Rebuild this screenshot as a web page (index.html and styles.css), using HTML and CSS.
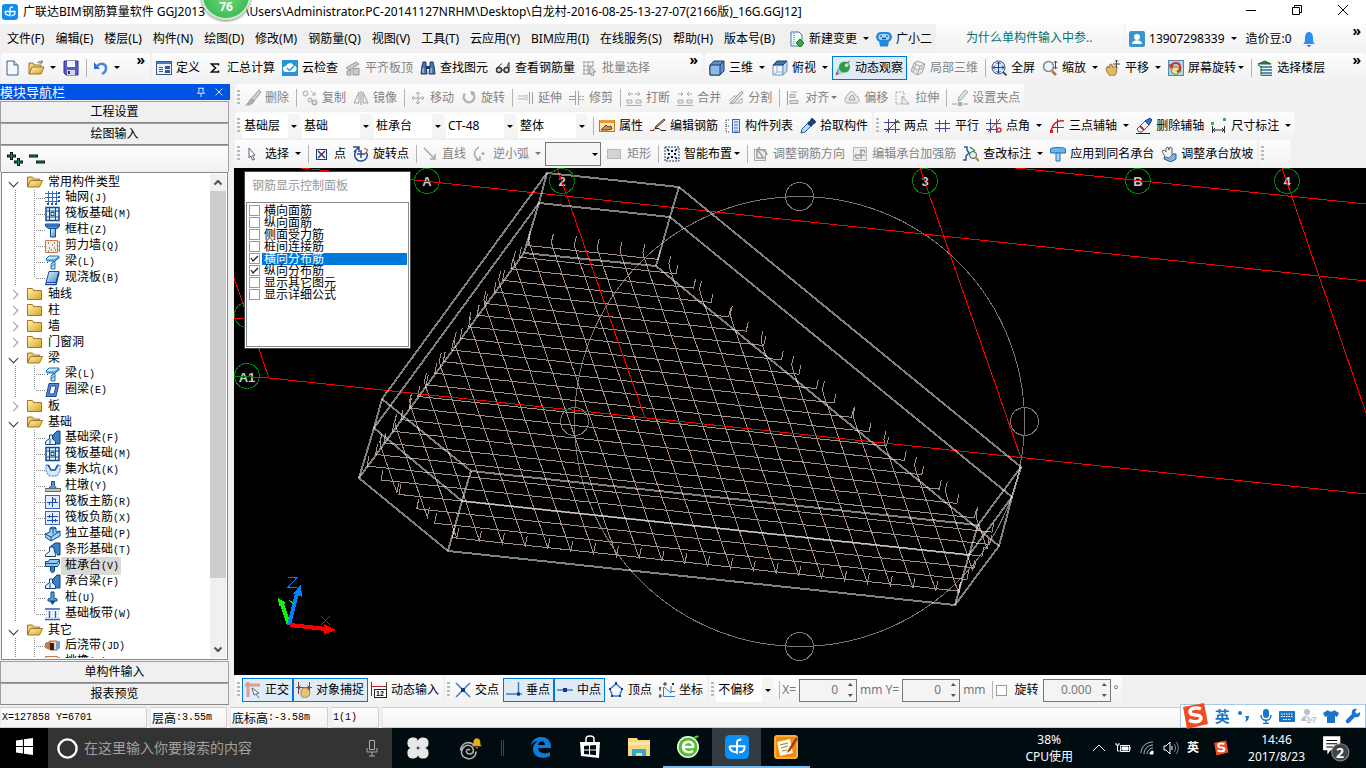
FILE: index.html
```html
<!DOCTYPE html>
<html lang="zh-CN">

<head>
    <meta charset="UTF-8">
    <meta name="viewport" content="width=device-width, initial-scale=1.0">
    <title>广联达BIM钢筋算量软件 GGJ2013</title>
    <link rel="stylesheet" href="styles.css">
</head>

<body>
    <!-- icon sprite -->
    <svg class="sprite" aria-hidden="true">
        <defs>
            <linearGradient id="g-folder" x1="0" y1="0" x2="1" y2="1">
                <stop offset="0" stop-color="#fff3b8" />
                <stop offset="1" stop-color="#e0a020" />
            </linearGradient>
            <linearGradient id="g-blue" x1="0" y1="0" x2="1" y2="1">
                <stop offset="0" stop-color="#e8f2fc" />
                <stop offset="1" stop-color="#4a8ac8" />
            </linearGradient>
        </defs>
        <symbol id="i-app" viewBox="0 0 16 16"><rect width="16" height="16" rx="3" fill="#0d8ef0" /><path d="M8 12.500V5q0-2 3-2M3 7.500h10v1q0 3-3.500 3M3 7.500q0 4 5 4" fill="none" stroke="#fff" stroke-width="1.300" /></symbol>
        <symbol id="i-new" viewBox="0 0 16 16"><path d="M2 1h7l4 4v10H2z" fill="#f4f9ff" stroke="#40608c" /><path d="M9 1v4h4" fill="#cfe0f4" stroke="#40608c" /></symbol>
        <symbol id="i-open" viewBox="0 0 16 16"><path d="M1 14V3h4l1 2h7v2" fill="#f7d477" stroke="#9a7420" /><path d="M1 14l3-7h12l-3 7z" fill="url(#g-folder)" stroke="#9a7420" /><path d="M9 3c2-2 4-2 5 0M14 0v3h-3" fill="none" stroke="#567" /></symbol>
        <symbol id="i-save" viewBox="0 0 16 16"><path d="M1 1h14v14H3l-2-2z" fill="#5a5ad0" stroke="#30308c" /><rect x="4" y="1" width="8" height="6" fill="#f4f4ff" /><rect x="4" y="10" width="8" height="5" fill="#d8d8e8" /><rect x="5" y="11" width="2" height="3" fill="#30308c" /></symbol>
        <symbol id="i-undo" viewBox="0 0 16 16"><path d="M2 2v7h6z" fill="#2f6fd0" /><path d="M5 6c4-4 9-2 9 2 0 3-2 5-4 6" fill="none" stroke="#4a86dc" stroke-width="2.500" /></symbol>
        <symbol id="i-define" viewBox="0 0 16 16"><rect x=".5" y="1.500" width="15" height="13" fill="#eaf2fc" stroke="#34588c" /><rect x="1" y="2" width="14" height="2" fill="#4a7cc0" /><path d="M3 7.500h4M3 9.500h4M3 11.500h4" stroke="#34588c" /><path d="M9 6h5v3H9zM9 10h5v3H9z" fill="#34588c" /></symbol>
        <symbol id="i-sum" viewBox="0 0 16 16"><path d="M11.500 5.500V4h-7l4 4-4 4h7v-1.500" fill="none" stroke="#111" stroke-width="1.600" /></symbol>
        <symbol id="i-cloud" viewBox="0 0 16 16"><rect width="16" height="16" fill="#2595d8" /><path d="M4 12a3 3 0 0 1 0-6 4 4 0 0 1 7.500-.5A3.300 3.300 0 0 1 12 12z" fill="#fff" /><path d="M5 8l2.500 2.500L12 6" fill="none" stroke="#2595d8" stroke-width="1.500" /></symbol>
        <symbol id="i-slab" viewBox="0 0 16 16"><path d="M1 8l10-6 3 2-9 6zM2 15V11l4-1v5zM8 15V9l6-1v7z" fill="#c9c9c9" stroke="#999" /></symbol>
        <symbol id="i-find" viewBox="0 0 16 16"><path d="M3 2h3v3l1 9H1l1-8zM10 2h3l1 4 1 8H9l1-9z" fill="#4a74ac" stroke="#1c3864" /><path d="M6 6h4v3H6z" fill="#1c3864" /><path d="M3 8v5M11 8v5" stroke="#cfe0f4" /></symbol>
        <symbol id="i-glasses" viewBox="0 0 16 16"><path d="M3 7L7 3.500M12 7l2-4.500v7M6.500 10h3" fill="none" stroke="#333" /><circle cx="4" cy="10" r="2.500" fill="#dde" stroke="#333" stroke-width="1.500" /><circle cx="11.500" cy="10" r="2.500" fill="#dde" stroke="#333" stroke-width="1.500" /></symbol>
        <symbol id="i-batch" viewBox="0 0 16 16"><path d="M1 2h11M1 6h11M1 10h8M1 14h8M2 1v14M6 1v14M11 1v5" stroke="#a4a4a4" /><path d="M8 6l6 6h-3l1 3-2 1-1-3-2 1z" fill="#ddd" stroke="#999" /></symbol>
        <symbol id="i-cube" viewBox="0 0 16 16"><path d="M1 5l4-4h10v10l-4 4H1z" fill="#5a94cc" stroke="#1c3c68" /><path d="M1 5h10v10H1z" fill="#8cbce4" stroke="#1c3c68" /><path d="M11 5l4-4" stroke="#1c3c68" /></symbol>
        <symbol id="i-top" viewBox="0 0 16 16"><path d="M1 5h10v10H1z" fill="#eef6ff" stroke="#6a90bc" /><path d="M11 5l4-4v10l-4 4z" fill="#c8def4" stroke="#6a90bc" /><path d="M1 5l4-4h10l-4 4z" fill="#3c78b4" stroke="#1c3c68" /><path d="M5 5v7h6M5 12l-4 3" fill="none" stroke="#90b0d0" /></symbol>
        <symbol id="i-orbit" viewBox="0 0 16 16"><ellipse cx="8" cy="8" rx="4" ry="8" transform="rotate(45 8 8)" fill="#a8ccd8" /><circle cx="9.500" cy="7" r="5.500" fill="#2f9c40" /><circle cx="11.500" cy="5" r="2" fill="#b8f0b0" /><path d="M1 15c1-5 5-9 14-14" fill="none" stroke="#4878a0" /><path d="M1 15l3-1-2-2z" fill="#c83020" /></symbol>
        <symbol id="i-part" viewBox="0 0 16 16"><path d="M8 1l7 3-3 9-5 2-6-4 3-8zM4 3l6 3 5-2M10 6l-3 9M6 4l-3 8M2 7l6 3 6-3" fill="#e4e4e4" stroke="#a8a8a8" /></symbol>
        <symbol id="i-full" viewBox="0 0 16 16"><circle cx="7.500" cy="7.500" r="6.500" fill="#dce8f8" stroke="#456" /><path d="M7.500 2v11M2 7.500h11M5.500 4l2-2 2 2M5.500 11l2 2 2-2M4 5.500l-2 2 2 2M11 5.500l2 2-2 2" fill="none" stroke="#1840a0" /><path d="M12 12l3.500 3.500" stroke="#456" stroke-width="2" /></symbol>
        <symbol id="i-zoom" viewBox="0 0 16 16"><circle cx="6.500" cy="6.500" r="5" fill="#f0f6fc" stroke="#789" stroke-width="1.500" /><path d="M10 11l4 4" stroke="#b07830" stroke-width="2.500" /><path d="M13.500 1v8M11.500 3l2-2 2 2M11.500 7l2 2 2-2" fill="none" stroke="#305080" /></symbol>
        <symbol id="i-pan" viewBox="0 0 16 16"><path d="M1 8l2-2 1 2 1-4 2 .5.500 3L10 6l2 1-1 7-2 2H5L2 12z" fill="#e0b866" stroke="#a07c38" /><path d="M11.500 0v8M8 4h7M10 1.500L11.500 0 13 1.500" fill="none" stroke="#444" /></symbol>
        <symbol id="i-rotview" viewBox="0 0 16 16"><rect x=".5" y=".5" width="15" height="15" fill="#a8d8e8" stroke="#58a" /><path d="M3 12l5 3 5-4-3-4H5z" fill="#e8e4a0" stroke="#6a8c40" /><path d="M3 6c2-4 8-4 9 0 1 3-1 5-3 6" fill="none" stroke="#e02818" stroke-width="2" /><path d="M1 4l1 5 4-3z" fill="#e02818" /></symbol>
        <symbol id="i-floor" viewBox="0 0 16 16"><path d="M1 4l7-3 6 3z" fill="#2c8c50" stroke="#1c5c30" /><path d="M4 7h11M4 10h11M4 13h11M5 15.500h10" stroke="#2c6ca0" stroke-width="1.500" /><path d="M4 6v10M1 5l3 2" stroke="#1c5c30" /></symbol>
        <symbol id="i-change" viewBox="0 0 16 16"><path d="M2 1h8l3 3v11H2z" fill="#f6fbff" stroke="#3c7cb0" /><path d="M5 2v12" stroke="#3c7cb0" stroke-dasharray="1 1" /><path d="M11 8l4 4-4 4-4-4z" fill="#38a838" stroke="#187818" /></symbol>
        <symbol id="i-robot" viewBox="0 0 16 16"><rect x="0" y="1" width="16" height="10" rx="5" fill="#2488dc" /><path d="M3 10h10l-1 5.500H4z" fill="#2488dc" /><rect x="2.500" y="3" width="11" height="6" rx="3" fill="#9cd8fc" /><path d="M5 4.500v1.500M11 4.500v1.500M6 7.500h4" stroke="#104878" stroke-width="1.300" /></symbol>
        <symbol id="i-user" viewBox="0 0 16 16"><rect width="16" height="16" rx="2" fill="#3c94c8" /><circle cx="8" cy="6" r="3" fill="#fff" /><path d="M3 13c0-5 10-5 10 0z" fill="#fff" /></symbol>
        <symbol id="i-bell" viewBox="0 0 16 16"><path d="M2 13c2-1 2-3 2-6 0-8 8-8 8 0 0 3 0 5 2 6z" fill="#2c8cf0" /><path d="M5.500 14h5L8 16z" fill="#1870d0" /></symbol>
        <symbol id="i-brush" viewBox="0 0 16 16"><path d="M14 0l2 2-7 9-3-2z" fill="#d0d0d0" stroke="#999" /><path d="M6 9l3 2c-1 3-4 4-7 3 2-1 2-4 4-5z" fill="#b0b0b0" stroke="#999" /><path d="M0 15h5" stroke="#aaa" /></symbol>
        <symbol id="i-copy" viewBox="0 0 16 16"><circle cx="3.500" cy="3.500" r="2.500" fill="#eee" stroke="#aaa" /><circle cx="8" cy="10" r="2" fill="#eee" stroke="#aaa" /><circle cx="12.500" cy="12.500" r="2.500" fill="#ddd" stroke="#999" /><path d="M9 1l4 4M13 2v3h-3" fill="none" stroke="#aaa" /></symbol>
        <symbol id="i-mirror" viewBox="0 0 16 16"><path d="M6 2v11H1zM10 2v11h5z" fill="#eee" stroke="#a4a4a4" /><path d="M8 1v14" stroke="#999" /></symbol>
        <symbol id="i-move" viewBox="0 0 16 16"><path d="M8 2v12M2 8h12M6 4l2-2 2 2M6 12l2 2 2-2M4 6L2 8l2 2M12 6l2 2-2 2" fill="none" stroke="#a8a8a8" /></symbol>
        <symbol id="i-rotate" viewBox="0 0 16 16"><path d="M4 3.500a5.300 5.300 0 1 0 8 0" fill="none" stroke="#b4b4b4" stroke-width="2.500" /><path d="M9 1l5 1-3 4z" fill="#aaa" /></symbol>
        <symbol id="i-extend" viewBox="0 0 16 16"><path d="M0 6h9M0 9h9" stroke="#b4b4b4" /><path d="M11.500 2v12M14.500 2v12" stroke="#a0a0a0" /><path d="M9 5v5" stroke="#999" stroke-dasharray="1 1" /></symbol>
        <symbol id="i-trim" viewBox="0 0 16 16"><path d="M6.500 1v14M9.500 1v14" stroke="#a4a4a4" /><path d="M0 6.500h6M0 9.500h6" stroke="#999" /><path d="M10 6.500h6M10 9.500h6" stroke="#aaa" stroke-dasharray="2 1" /></symbol>
        <symbol id="i-break" viewBox="0 0 16 16"><path d="M1 13v-3h5v3zM10 13v-3h5v3z" fill="#eee" stroke="#aaa" /><path d="M7 4H2M9 4h5M4 2L2 4l2 2M12 2l2 2-2 2M0 15.500h16" fill="none" stroke="#aaa" /></symbol>
        <symbol id="i-merge" viewBox="0 0 16 16"><path d="M1 13v-3h5v3zM10 13v-3h5v3z" fill="#eee" stroke="#aaa" /><path d="M1 4h5M15 4h-5M4 2l2 2-2 2M12 2l-2 2 2 2M0 15.500h16" fill="none" stroke="#aaa" /></symbol>
        <symbol id="i-split" viewBox="0 0 16 16"><path d="M1 11l5-5h5M1 13h8l5-5v5H9" fill="none" stroke="#aaa" /><path d="M14 1l1 2-9 10-3 1 1-3z" fill="#ddd" stroke="#999" /></symbol>
        <symbol id="i-align" viewBox="0 0 16 16"><path d="M2.500 1v14" stroke="#999" /><path d="M5 4.500h5v3H5zM5 10.500h8v3H5z" fill="#ddd" stroke="#aaa" /><path d="M12 2H6" stroke="#aaa" /></symbol>
        <symbol id="i-offset" viewBox="0 0 16 16"><path d="M5 3c2-3 5-1 6 2l3 2c2 3 1 6-2 6H4c-3 0-4-3-2-6z" fill="#e8e8e8" stroke="#aaa" /><path d="M7 6c1-2 3 0 3 2l1 2H5z" fill="none" stroke="#999" /></symbol>
        <symbol id="i-stretch" viewBox="0 0 16 16"><path d="M1 2h8v5M1 2v12h5" fill="none" stroke="#aaa" stroke-dasharray="2 1" /><path d="M7 14V6l7 8z" fill="#eee" stroke="#aaa" /></symbol>
        <symbol id="i-grip" viewBox="0 0 16 16"><path d="M0 14h5M11 14h5" stroke="#999" /><rect x="6" y="12" width="4" height="4" fill="#aaa" /><path d="M13 0l3 2-7 8-3 1 1-4z" fill="#ddd" stroke="#aaa" /></symbol>
        <symbol id="i-props" viewBox="0 0 16 16"><rect x=".5" y="2.500" width="15" height="11" fill="#fbe6b4" stroke="#c07820" /><rect x="1" y="2" width="14" height="3" fill="#e8983c" /><path d="M2 12l5-5 2 2 3-1 1 3-4 1z" fill="#d89040" stroke="#6a4010" /></symbol>
        <symbol id="i-editbar" viewBox="0 0 16 16"><path d="M0 12.500h3l2-2h4l2 2h5" fill="none" stroke="#222" /><path d="M15 2l-8 7-2 1 1-2 8-7z" fill="#d0c050" stroke="#443" /><path d="M0 12.500h4" stroke="#a02010" /></symbol>
        <symbol id="i-list" viewBox="0 0 16 16"><path d="M1 2v12M1 2h4M1 8h4M1 14h4" fill="none" stroke="#345" stroke-dasharray="1 1" /><rect x="7.500" y="1.500" width="7" height="13" fill="#dcecfc" stroke="#3868a8" /><path d="M9 4h4M9 7h4M9 10h4M9 13h4" stroke="#3868a8" /></symbol>
        <symbol id="i-pick" viewBox="0 0 16 16"><path d="M1 15l1-4 6-6 3 3-6 6z" fill="#b8dcf8" stroke="#2458a0" /><path d="M8 4l4 4M9 6l3-5 3 3-4 3z" fill="#2458a0" stroke="#183c70" stroke-width="2" /></symbol>
        <symbol id="i-axis2" viewBox="0 0 16 16"><path d="M4.500 1v14M11.500 1v14M0 4.500h16M0 11.500h16" stroke="#444878" /><path d="M2 14L14 2" stroke="#c02020" /><path d="M13 3h2v2h-2z" fill="#20a020" /></symbol>
        <symbol id="i-axis" viewBox="0 0 16 16"><path d="M4.500 2v12M10.500 2v12M0 5.500h15M0 10.500h15" stroke="#3c4890" /></symbol>
        <symbol id="i-axisang" viewBox="0 0 16 16"><path d="M4.500 1v14M10.500 1v14M0 5.500h15M0 11.500h10" stroke="#3c4890" /><path d="M14 1L2 14" stroke="#c82020" /><circle cx="13" cy="12" r="2" fill="none" stroke="#e03030" stroke-width="1.500" /></symbol>
        <symbol id="i-arc3" viewBox="0 0 16 16"><path d="M15 3C8 2 3 6 2 14" fill="none" stroke="#c82828" stroke-width="1.500" /><path d="M8.500 1v14M4 9.500h11" stroke="#3c4890" /><path d="M1 12h3v3H1z" fill="#d02020" /></symbol>
        <symbol id="i-erase" viewBox="0 0 16 16"><path d="M1 11L9 3l4 4-7 7H3z" fill="#eef4fa" stroke="#2c5c9c" /><path d="M9 3l5-3 2 2-3 5z" fill="#3c70c0" stroke="#1c4080" /><path d="M4 8l4 4" stroke="#d02050" stroke-width="2" /><path d="M0 15.500h14" stroke="#223" /></symbol>
        <symbol id="i-dim" viewBox="0 0 16 16"><path d="M1.500 8v7M13.500 8v7M1 12h12M4 10l-2 2 2 2M11 10l2 2-2 2" fill="none" stroke="#333" /><path d="M0 4h3v3H0zM12 0h3v3h-3z" fill="#38b048" /></symbol>
        <symbol id="i-cursor" viewBox="0 0 16 16"><path d="M4 2l6 7-2.500.5 2 4-2 .5-1.500-4L4 12z" fill="#fff" stroke="#567" /></symbol>
        <symbol id="i-point" viewBox="0 0 16 16"><rect x="2.500" y="3.500" width="10" height="10" fill="#f4f8ff" stroke="#203c80" /><path d="M4 5l7 7M11 5l-7 7" stroke="#203c80" stroke-width="1.500" /><circle cx="7.500" cy="8.500" r="1.500" fill="#c02020" /></symbol>
        <symbol id="i-rotpt" viewBox="0 0 16 16"><path d="M3 5c-3 5 0 10 5 10s8-5 5-9" fill="none" stroke="#2c4c90" stroke-width="1.500" /><path d="M0 1h6v5M6 1L1 6M8 4v8M4 8h8" fill="none" stroke="#2c4c90" stroke-width="1.500" /><path d="M11 2l4 2-3 4" fill="none" stroke="#c05020" /></symbol>
        <symbol id="i-line" viewBox="0 0 16 16"><path d="M2 2l11 11M13 8v5H8" fill="none" stroke="#a8a8a8" stroke-width="1.500" /></symbol>
        <symbol id="i-arc" viewBox="0 0 16 16"><path d="M6 1C0 5 0 11 6 14M3 14h4v-4" fill="none" stroke="#a8a8a8" stroke-width="1.500" /><circle cx="10" cy="7.500" r="1.500" fill="#aaa" /></symbol>
        <symbol id="i-rect" viewBox="0 0 16 16"><rect x=".5" y="3.500" width="13" height="9" fill="#d4d4d4" stroke="#b8b8b8" /></symbol>
        <symbol id="i-smart" viewBox="0 0 16 16"><rect x="1" y="1" width="14" height="14" fill="#f0f6ff" stroke="#223c70" stroke-dasharray="2 1" /><path d="M8 4v2M8 10v2M4 8h2M10 8h2" stroke="#112" stroke-width="2" /><path d="M3 3l2 2M13 3l-2 2M3 13l2-2M13 13l-2-2" stroke="#112" stroke-width="1.500" /></symbol>
        <symbol id="i-dir" viewBox="0 0 16 16"><rect x="1.500" y="3.500" width="11" height="11" fill="#eee" stroke="#aaa" /><path d="M4 4v8h8M7 1l-3 3 3 3M5 4c5-1 8 1 9 5M7 7l3 4" fill="none" stroke="#a0a0a0" stroke-width="1.500" /></symbol>
        <symbol id="i-stiff" viewBox="0 0 16 16"><rect x="1.500" y="1.500" width="13" height="13" fill="#eee" stroke="#bbb" /><path d="M9 3v10M3 9h10M9 5c3-2 4 0 4 2M3 9c0 3 2 4 4 3" fill="none" stroke="#a0a0a0" stroke-width="1.500" /></symbol>
        <symbol id="i-check" viewBox="0 0 16 16"><path d="M1 1h3v3l2 3-3 3v4H0" fill="none" stroke="#2c58a8" stroke-width="1.500" /><circle cx="10" cy="9" r="3.500" fill="#e4f4e4" stroke="#405060" /><path d="M12 11l4 4" stroke="#c08030" stroke-width="2" /><path d="M7 1l5 4" stroke="#2c8c40" stroke-width="1.500" /></symbol>
        <symbol id="i-apply" viewBox="0 0 16 16"><path d="M.5 3c0-2 15-2 15 0v4H.5z" fill="#6cb4ec" stroke="#2c6cb0" /><path d="M6 7h4v8H6z" fill="#a8d4f4" stroke="#2c6cb0" /></symbol>
        <symbol id="i-slope" viewBox="0 0 16 16"><path d="M4 8h11v5l-5 3-7-3z" fill="#78b4e4" stroke="#2458a0" /><path d="M1 5l2-1 2 2V2l2-1 1 3 1-3 2 1v7l-3 3-4-1z" fill="#f4f4f4" stroke="#666" /></symbol>
        <symbol id="i-ortho" viewBox="0 0 16 16"><path d="M0 3h15M3 0v15" stroke="#e09a9a" stroke-width="3" /><path d="M7 6l7 5-3 1 3 4M7 6l2 7 2-1" fill="#fff" stroke="#667" /></symbol>
        <symbol id="i-snap" viewBox="0 0 16 16"><path d="M2.500 0v12M13.500 0v9M0 5.500h16M4.500 3.500l-2 2 2 2M11.500 3.500l2 2-2 2" fill="none" stroke="#8c3c3c" /><path d="M5 9l2-3 4 0 3 4-1 4-4 2-4-2z" fill="#e4c478" stroke="#b08c48" /></symbol>
        <symbol id="i-dyn" viewBox="0 0 16 16"><path d="M0 4.500h16" stroke="#b03030" /><path d="M.5 0v14M15.500 0v8" stroke="#444" /><rect x="3.500" y="7.500" width="12" height="8" fill="#fff" stroke="#222" /><text x="5" y="14" font-size="7" font-weight="700" font-family="Liberation Sans">12</text></symbol>
        <symbol id="i-cross" viewBox="0 0 16 16"><path d="M1 1l14 14M15 1L1 15" stroke="#3c7cc8" stroke-width="1.500" /><path d="M6 6h4v4H6z" fill="#103c80" /></symbol>
        <symbol id="i-perp" viewBox="0 0 16 16"><path d="M0 12h16M12.500 0v14" stroke="#3c7cc8" stroke-width="1.500" /><path d="M11 10.500h3v3h-3z" fill="#103c80" /></symbol>
        <symbol id="i-mid" viewBox="0 0 16 16"><path d="M0 8h16" stroke="#3c7cc8" stroke-width="1.500" /><path d="M6 6h4v4H6z" fill="#103c80" /></symbol>
        <symbol id="i-vertex" viewBox="0 0 16 16"><path d="M8 2l6 5-2.500 7h-7L2 7z" fill="none" stroke="#3c7cc8" stroke-width="1.500" /><path d="M7 0h2v3H7zM1 6h2v2H1zM13 6h2v2h-2zM3 13h2v2H3zM11 13h2v2h-2z" fill="#103c80" /></symbol>
        <symbol id="i-coord" viewBox="0 0 16 16"><path d="M4.500 5v9.500H16M5 5l7 6V4M12 9.500h4" fill="none" stroke="#3c7cc8" /><path d="M0 5l1 2 1-2M1 7v2M0 13h2v2H0zM5 1h2v2H5zM13 1l2 2M15 1l-2 2" fill="none" stroke="#333" /></symbol>
        <!-- tree icons -->
        <symbol id="t-open" viewBox="0 0 16 16"><path d="M.5 13V3h5l1 2h6v2" fill="#f4cf70" stroke="#a07820" /><path d="M.5 13l3-6.500h12l-3 6.500z" fill="url(#g-folder)" stroke="#a07820" /></symbol>
        <symbol id="t-closed" viewBox="0 0 16 16"><path d="M.5 13.500v-11h5l1 2h8v9z" fill="url(#g-folder)" stroke="#a07820" /></symbol>
        <symbol id="t-grid" viewBox="0 0 16 16"><path d="M3.500 1v12M7.500 1v12M11.500 1v12M0 3.500h13M0 7.500h13M0 11.500h13" stroke="#3868c8" /><path d="M13 2h2v2h-2zM13 6h2v2h-2zM13 10h2v2h-2zM2 13h2v2H2zM6 13h2v2H6zM10 13h2v2h-2z" fill="#2050a0" /></symbol>
        <symbol id="t-raft" viewBox="0 0 16 16"><rect x="1" y="1.500" width="13" height="13" fill="#e8f2fc" stroke="#0c4c90" stroke-width="1.500" /><path d="M4.500 2v12M10.500 2v12M2 5h12M2 11h12" stroke="#0c4c90" /><rect x="6" y="6.500" width="3" height="3" fill="#fff" stroke="#0c4c90" /></symbol>
        <symbol id="t-column" viewBox="0 0 16 16"><path d="M.5 2h14v2l-2 2.500H3L.5 4z" fill="#5c94d4" stroke="#0c4c90" /><path d="M1 4h13" stroke="#0c4c90" /><path d="M5.500 6.500h5V15h-5z" fill="url(#g-blue)" stroke="#0c4c90" /></symbol>
        <symbol id="t-wall" viewBox="0 0 16 16"><path d="M.5 2.500h12v12H.5z" fill="#f4ece4" stroke="#c87848" /><path d="M3 5h1M7 7h1M4 10h1M9 10h1M6 12h1M3 13h1M9 5h1M10 12h1" stroke="#333" /><path d="M13 4h1M13 8h1M13 12h1M14.500 3v11" stroke="#c87848" /></symbol>
        <symbol id="t-beam" viewBox="0 0 16 16"><path d="M1 5l3-3h10v2l-4 3v8H6v-5l3-3H2z" fill="#c8e8fc" stroke="#1c70b8" /><path d="M2 6h7l5-3M6 10l4-3M6 13l4-3M3 8l-1 1" stroke="#1c70b8" fill="none" /></symbol>
        <symbol id="t-slab" viewBox="0 0 16 16"><path d="M4 1.500h10l-3 11H1z" fill="url(#g-blue)" stroke="#1848a0" /><path d="M1 13v1.500h10l3-12" fill="none" stroke="#1848a0" stroke-width="1.500" /></symbol>
        <symbol id="t-ring" viewBox="0 0 16 16"><path d="M4 1.500h10l-3 13H1z" fill="#5c88d0" stroke="#1848a0" /><path d="M6 4h5l-2 8H4z" fill="#fff" stroke="#1848a0" /></symbol>
        <symbol id="t-fbeam" viewBox="0 0 16 16"><path d="M7 6l5-5h3v13h-5z" fill="#3c80c4" stroke="#0c4480" /><path d="M.5 14.500v-3l4-3V5h3v4l3 2v3.500z" fill="#e4f0fc" stroke="#0c4480" /><path d="M5 9v5" stroke="#0c4480" /></symbol>
        <symbol id="t-pit" viewBox="0 0 16 16"><path d="M1 3h3l2 5h4l2-5h3v6l-3 5H4L1 9z" fill="#d4e8fc" stroke="#3478c0" stroke-dasharray="2 1" /><path d="M3 3l3 5h4l3-5" fill="none" stroke="#1c58a0" stroke-width="1.500" /></symbol>
        <symbol id="t-pier" viewBox="0 0 16 16"><path d="M6.500 3.500h3v4l2 3h-8l3-3z" fill="#5c94d4" stroke="#1c4c90" /><path d="M0 10.500h15.500v3H0z" fill="#c4c4c4" stroke="#666" /></symbol>
        <symbol id="t-main" viewBox="0 0 16 16"><rect x=".5" y="1.500" width="14" height="13" fill="#e4eeff" stroke="#3468c8" /><path d="M7.500 3v10M2 8.500h11M4.500 8v3M10.500 8V5h-3" fill="none" stroke="#1c48a8" /></symbol>
        <symbol id="t-neg" viewBox="0 0 16 16"><rect x=".5" y="1.500" width="14" height="13" fill="#e4eeff" stroke="#3468c8" /><path d="M7.500 3v10M2 6.500h11M2 10.500h11M4.500 5v3M10.500 9v3" fill="none" stroke="#1c48a8" /></symbol>
        <symbol id="t-isol" viewBox="0 0 16 16"><path d="M0 8l5-2V2l3-1 3 1v4l4-1v5l-9 5-6-4z" fill="#a8d0f0" stroke="#0c4c90" /><path d="M0 8l6 3 9-6M6 11v4M5 2l3 1 3-1M8 3v5" fill="none" stroke="#0c4c90" /></symbol>
        <symbol id="t-strip" viewBox="0 0 16 16"><path d="M5 5l5-4h5v12h-3" fill="#3c80c4" stroke="#0c4480" /><path d="M.5 14.500v-2l4-3V5h4l2 7.500v2z" fill="#e8f4fc" stroke="#0c4480" /></symbol>
        <symbol id="t-cap" viewBox="0 0 16 16"><path d="M.5 3.500h3l1-2h10v4l-2 3h-12z" fill="#98c8f0" stroke="#0c4c90" /><path d="M1 5.500h11l2-3" fill="none" stroke="#0c4c90" /><path d="M5.500 8.500h4V13l-2 2-2-2z" fill="#3c80c4" stroke="#0c4c90" /></symbol>
        <symbol id="t-pile" viewBox="0 0 16 16"><path d="M6 2h3v6l3 1v2H3V9l3-1z" fill="#5c9cdc" stroke="#0c4c90" /><path d="M4.500 11h6l-3 4z" fill="#0c4c90" /></symbol>
        <symbol id="t-band" viewBox="0 0 16 16"><path d="M0 3h15M0 13.500h15" stroke="#2c60b8" stroke-width="1.500" /><path d="M4.500 5v7M10.500 5v7" stroke="#2c60b8" stroke-width="1.500" /><path d="M7.500 5v7M1.500 5v7M13.500 5v7" stroke="#8cb0e0" stroke-dasharray="1 2" /></symbol>
        <symbol id="t-post" viewBox="0 0 16 16"><path d="M0 5l5-2v9l-5-2z" fill="#c08050" /><path d="M5 3h7v9H5z" fill="#f4d4b0" stroke="#a86030" /><path d="M11 3h4v7l-4 3z" fill="#6ca4dc" /><path d="M5 5h4v7H5z" fill="#3a2014" /></symbol>
    </svg>

    <div class="app">
        <header class="titlebar">
            <svg class="icon"><use href="#i-app" /></svg>
            <h1>广联达BIM钢筋算量软件 GGJ2013<span>\Users\Administrator.PC-20141127NRHM\Desktop\白龙村-2016-08-25-13-27-07(2166版)_16G.GGJ12]</span></h1>
            <div class="window-buttons">
                <button aria-label="最小化"><svg viewBox="0 0 12 12"><path d="M1 6.500h10" /></svg></button>
                <button aria-label="还原"><svg viewBox="0 0 12 12"><path d="M1.500 3.500h7v7h-7zM3.500 3.500v-2h7v7h-2" /></svg></button>
                <button aria-label="关闭"><svg viewBox="0 0 12 12"><path d="M1 1l10 10M11 1L1 11" /></svg></button>
            </div>
            <div class="speed-ball">76</div>
        </header>

        <nav class="menubar">
            <a href="#">文件(F)</a>
            <a href="#">编辑(E)</a>
            <a href="#">楼层(L)</a>
            <a href="#">构件(N)</a>
            <a href="#">绘图(D)</a>
            <a href="#">修改(M)</a>
            <a href="#">钢筋量(Q)</a>
            <a href="#">视图(V)</a>
            <a href="#">工具(T)</a>
            <a href="#">云应用(Y)</a>
            <a href="#">BIM应用(I)</a>
            <a href="#">在线服务(S)</a>
            <a href="#">帮助(H)</a>
            <a href="#">版本号(B)</a>
            <button class="tool drop"><svg class="icon"><use href="#i-change" /></svg>新建变更</button>
            <button class="tool"><svg class="icon"><use href="#i-robot" /></svg>广小二</button>
            <a class="tip" href="#">为什么单构件输入中参..</a>
            <div class="group account">
                <button class="tool drop"><svg class="icon"><use href="#i-user" /></svg>13907298339</button>
                <span class="beans">造价豆:0</span>
                <button class="tool" aria-label="消息"><svg class="icon"><use href="#i-bell" /></svg></button>
                <button class="more">»</button>
            </div>
        </nav>

        <div class="toolbar top">
            <div class="group file">
                <button class="tool" aria-label="新建"><svg class="icon"><use href="#i-new" /></svg></button>
                <button class="tool drop" aria-label="打开"><svg class="icon"><use href="#i-open" /></svg></button>
                <button class="tool" aria-label="保存"><svg class="icon"><use href="#i-save" /></svg></button>
                <span class="sep"></span>
                <button class="tool drop" aria-label="撤销"><svg class="icon"><use href="#i-undo" /></svg></button>
                <button class="more">»</button>
            </div>
            <div class="group calc">
                <button class="tool"><svg class="icon"><use href="#i-define" /></svg>定义</button>
                <button class="tool"><svg class="icon"><use href="#i-sum" /></svg>汇总计算</button>
                <button class="tool"><svg class="icon"><use href="#i-cloud" /></svg>云检查</button>
                <button class="tool" disabled><svg class="icon"><use href="#i-slab" /></svg>平齐板顶</button>
                <button class="tool"><svg class="icon"><use href="#i-find" /></svg>查找图元</button>
                <button class="tool"><svg class="icon"><use href="#i-glasses" /></svg>查看钢筋量</button>
                <button class="tool" disabled><svg class="icon"><use href="#i-batch" /></svg>批量选择</button>
                <button class="more">»</button>
            </div>
            <div class="group view">
                <button class="tool drop"><svg class="icon"><use href="#i-cube" /></svg>三维</button>
                <button class="tool drop"><svg class="icon"><use href="#i-top" /></svg>俯视</button>
                <button class="tool active"><svg class="icon"><use href="#i-orbit" /></svg>动态观察</button>
                <button class="tool" disabled><svg class="icon"><use href="#i-part" /></svg>局部三维</button>
                <span class="sep"></span>
                <button class="tool"><svg class="icon"><use href="#i-full" /></svg>全屏</button>
                <button class="tool drop"><svg class="icon"><use href="#i-zoom" /></svg>缩放</button>
                <button class="tool drop"><svg class="icon"><use href="#i-pan" /></svg>平移</button>
                <button class="tool drop tight"><svg class="icon"><use href="#i-rotview" /></svg>屏幕旋转</button>
                <span class="sep"></span>
                <button class="tool"><svg class="icon"><use href="#i-floor" /></svg>选择楼层</button>
                <button class="more">»</button>
            </div>
        </div>

        <div class="main">
            <aside class="sidebar">
                <div class="sidebar-title">
                    <h2>模块导航栏</h2>
                    <button aria-label="固定"><svg viewBox="0 0 12 12"><path d="M3.500 1v6M8.500 1v6M3 1.500h6M1 7.500h10M6 8v4" /></svg></button>
                    <button aria-label="关闭"><svg viewBox="0 0 12 12"><path d="M2 2l8 8M10 2l-8 8" /></svg></button>
                </div>
                <button class="section">工程设置</button>
                <button class="section">绘图输入</button>
                <div class="tree-tools">
                    <button aria-label="全部展开"><svg viewBox="0 0 18 16"><path d="M5.500 1v8M1 5h9M12.500 7v8M8 11h9" stroke="#111" stroke-width="3" /><path d="M5.500 2v6M2 5h7M12.500 8v6M9 11h7" stroke="#0a8c80" stroke-width="1.200" /></svg></button>
                    <button aria-label="全部折叠"><svg viewBox="0 0 18 16"><path d="M1 5h9M8 11h9" stroke="#111" stroke-width="3" /><path d="M2 5h7M9 11h7" stroke="#0a8c80" stroke-width="1.200" /></svg></button>
                </div>
                <div class="tree-box">
                    <ul class="tree">
                        <li class="open"><span class="node"><svg class="icon"><use href="#t-open" /></svg>常用构件类型</span>
                            <ul>
                                <li><svg class="icon"><use href="#t-grid" /></svg><span>轴网<i>(J)</i></span></li>
                                <li><svg class="icon"><use href="#t-raft" /></svg><span>筏板基础<i>(M)</i></span></li>
                                <li><svg class="icon"><use href="#t-column" /></svg><span>框柱<i>(Z)</i></span></li>
                                <li><svg class="icon"><use href="#t-wall" /></svg><span>剪力墙<i>(Q)</i></span></li>
                                <li><svg class="icon"><use href="#t-beam" /></svg><span>梁<i>(L)</i></span></li>
                                <li><svg class="icon"><use href="#t-slab" /></svg><span>现浇板<i>(B)</i></span></li>
                            </ul>
                        </li>
                        <li><span class="node"><svg class="icon"><use href="#t-closed" /></svg>轴线</span></li>
                        <li><span class="node"><svg class="icon"><use href="#t-closed" /></svg>柱</span></li>
                        <li><span class="node"><svg class="icon"><use href="#t-closed" /></svg>墙</span></li>
                        <li><span class="node"><svg class="icon"><use href="#t-closed" /></svg>门窗洞</span></li>
                        <li class="open"><span class="node"><svg class="icon"><use href="#t-open" /></svg>梁</span>
                            <ul>
                                <li><svg class="icon"><use href="#t-beam" /></svg><span>梁<i>(L)</i></span></li>
                                <li><svg class="icon"><use href="#t-ring" /></svg><span>圈梁<i>(E)</i></span></li>
                            </ul>
                        </li>
                        <li><span class="node"><svg class="icon"><use href="#t-closed" /></svg>板</span></li>
                        <li class="open"><span class="node"><svg class="icon"><use href="#t-open" /></svg>基础</span>
                            <ul>
                                <li><svg class="icon"><use href="#t-fbeam" /></svg><span>基础梁<i>(F)</i></span></li>
                                <li><svg class="icon"><use href="#t-raft" /></svg><span>筏板基础<i>(M)</i></span></li>
                                <li><svg class="icon"><use href="#t-pit" /></svg><span>集水坑<i>(K)</i></span></li>
                                <li><svg class="icon"><use href="#t-pier" /></svg><span>柱墩<i>(Y)</i></span></li>
                                <li><svg class="icon"><use href="#t-main" /></svg><span>筏板主筋<i>(R)</i></span></li>
                                <li><svg class="icon"><use href="#t-neg" /></svg><span>筏板负筋<i>(X)</i></span></li>
                                <li><svg class="icon"><use href="#t-isol" /></svg><span>独立基础<i>(P)</i></span></li>
                                <li><svg class="icon"><use href="#t-strip" /></svg><span>条形基础<i>(T)</i></span></li>
                                <li class="selected"><svg class="icon"><use href="#t-cap" /></svg><span>桩承台<i>(V)</i></span></li>
                                <li><svg class="icon"><use href="#t-fbeam" /></svg><span>承台梁<i>(F)</i></span></li>
                                <li><svg class="icon"><use href="#t-pile" /></svg><span>桩<i>(U)</i></span></li>
                                <li><svg class="icon"><use href="#t-band" /></svg><span>基础板带<i>(W)</i></span></li>
                            </ul>
                        </li>
                        <li class="open"><span class="node"><svg class="icon"><use href="#t-open" /></svg>其它</span>
                            <ul>
                                <li><svg class="icon"><use href="#t-post" /></svg><span>后浇带<i>(JD)</i></span></li>
                                <li><svg class="icon"><use href="#t-wall" /></svg><span>挑檐<i>(T)</i></span></li>
                            </ul>
                        </li>
                    </ul>
                    <div class="scrollbar">
                        <svg viewBox="0 0 16 16"><path d="M4.500 10L8 6.500l3.500 3.500" /></svg>
                        <div class="track"><div class="thumb"></div></div>
                        <svg viewBox="0 0 16 16"><path d="M4.500 6L8 9.500 11.500 6" /></svg>
                    </div>
                </div>
                <button class="section">单构件输入</button>
                <button class="section">报表预览</button>
            </aside>

            <section class="work">
                <div class="toolbar">
                    <div class="group">
                        <span class="grip"></span>
                        <button class="tool" disabled><svg class="icon"><use href="#i-brush" /></svg>删除</button>
                        <span class="sep"></span>
                        <button class="tool" disabled><svg class="icon"><use href="#i-copy" /></svg>复制</button>
                        <button class="tool" disabled><svg class="icon"><use href="#i-mirror" /></svg>镜像</button>
                        <span class="sep"></span>
                        <button class="tool" disabled><svg class="icon"><use href="#i-move" /></svg>移动</button>
                        <button class="tool" disabled><svg class="icon"><use href="#i-rotate" /></svg>旋转</button>
                        <span class="sep"></span>
                        <button class="tool" disabled><svg class="icon"><use href="#i-extend" /></svg>延伸</button>
                        <button class="tool" disabled><svg class="icon"><use href="#i-trim" /></svg>修剪</button>
                        <span class="sep"></span>
                        <button class="tool" disabled><svg class="icon"><use href="#i-break" /></svg>打断</button>
                        <button class="tool" disabled><svg class="icon"><use href="#i-merge" /></svg>合并</button>
                        <button class="tool" disabled><svg class="icon"><use href="#i-split" /></svg>分割</button>
                        <span class="sep"></span>
                        <button class="tool drop tight" disabled><svg class="icon"><use href="#i-align" /></svg>对齐</button>
                        <button class="tool" disabled><svg class="icon"><use href="#i-offset" /></svg>偏移</button>
                        <button class="tool" disabled><svg class="icon"><use href="#i-stretch" /></svg>拉伸</button>
                        <span class="sep"></span>
                        <button class="tool" disabled><svg class="icon"><use href="#i-grip" /></svg>设置夹点</button>
                    </div>
                </div>
                <div class="toolbar">
                    <div class="group">
                        <span class="grip"></span>
                        <select class="combo short" aria-label="楼层"><option>基础层</option></select>
                        <select class="combo" aria-label="构件大类"><option>基础</option></select>
                        <select class="combo" aria-label="构件类型"><option>桩承台</option></select>
                        <select class="combo" aria-label="构件"><option>CT-48</option></select>
                        <select class="combo" aria-label="范围"><option>整体</option></select>
                        <span class="sep"></span>
                        <button class="tool"><svg class="icon"><use href="#i-props" /></svg>属性</button>
                        <button class="tool"><svg class="icon"><use href="#i-editbar" /></svg>编辑钢筋</button>
                        <button class="tool"><svg class="icon"><use href="#i-list" /></svg>构件列表</button>
                        <button class="tool"><svg class="icon"><use href="#i-pick" /></svg>拾取构件</button>
                    </div>
                    <div class="group">
                        <span class="grip"></span>
                        <button class="tool"><svg class="icon"><use href="#i-axis2" /></svg>两点</button>
                        <button class="tool"><svg class="icon"><use href="#i-axis" /></svg>平行</button>
                        <button class="tool drop"><svg class="icon"><use href="#i-axisang" /></svg>点角</button>
                        <button class="tool drop"><svg class="icon"><use href="#i-arc3" /></svg>三点辅轴</button>
                        <button class="tool"><svg class="icon"><use href="#i-erase" /></svg>删除辅轴</button>
                        <button class="tool drop"><svg class="icon"><use href="#i-dim" /></svg>尺寸标注</button>
                    </div>
                </div>
                <div class="toolbar">
                    <div class="group">
                        <span class="grip"></span>
                        <button class="tool drop"><svg class="icon"><use href="#i-cursor" /></svg>选择</button>
                        <span class="sep"></span>
                        <button class="tool"><svg class="icon"><use href="#i-point" /></svg>点</button>
                        <button class="tool"><svg class="icon"><use href="#i-rotpt" /></svg>旋转点</button>
                        <span class="sep"></span>
                        <button class="tool" disabled><svg class="icon"><use href="#i-line" /></svg>直线</button>
                        <button class="tool drop" disabled><svg class="icon"><use href="#i-arc" /></svg>逆小弧</button>
                        <select class="combo boxed" aria-label="半径" disabled><option></option></select>
                        <button class="tool" disabled><svg class="icon"><use href="#i-rect" /></svg>矩形</button>
                        <span class="sep"></span>
                        <button class="tool drop tight"><svg class="icon"><use href="#i-smart" /></svg>智能布置</button>
                        <span class="sep"></span>
                        <button class="tool" disabled><svg class="icon"><use href="#i-dir" /></svg>调整钢筋方向</button>
                        <button class="tool" disabled><svg class="icon"><use href="#i-stiff" /></svg>编辑承台加强筋</button>
                        <button class="tool drop"><svg class="icon"><use href="#i-check" /></svg>查改标注</button>
                        <button class="tool"><svg class="icon"><use href="#i-apply" /></svg>应用到同名承台</button>
                        <button class="tool"><svg class="icon"><use href="#i-slope" /></svg>调整承台放坡</button>
                    </div>
                    <div class="group empty">
                        <span class="grip"></span>
                    </div>
                </div>

                <div class="viewport">
                    <svg class="scene" viewBox="234 168 1132 507" preserveAspectRatio="xMinYMin slice">
                        <g class="orbit">
                            <circle cx="799.500" cy="421.500" r="225" />
                            <circle cx="799.500" cy="196.500" r="14" />
                            <circle cx="799.500" cy="646.500" r="14" />
                            <circle cx="574.500" cy="421.500" r="14" />
                            <circle cx="1024.500" cy="421.500" r="14" />
                        </g>
                        <g id="mesh" class="mesh"></g>
                        <g class="axis-names">
                            <text x="427" y="186">A</text>
                            <text x="562" y="186">2</text>
                            <text x="925" y="186">3</text>
                            <text x="1138" y="186">B</text>
                            <text x="1287" y="186">4</text>
                            <text x="247" y="382">A1</text>
                        </g>
                        <g class="axis-lines">
                            <path d="M301 168L1366 281" />
                            <path d="M1016 168L1366 204" />
                            <path d="M269 378L1366 494" />
                            <path d="M557 168L645 418" />
                            <path d="M920 168L1021 458" />
                            <path d="M1282 168L1366 413" />
                            <path d="M234 278L269 378" />
                            <path d="M234 318L250 319" />
                        </g>
                        <g id="prism" class="prism"></g>
                        <g class="axis-marks">
                            <path d="M234 376L269 378" />
                            <circle cx="427" cy="181" r="12.500" />
                            <circle cx="562" cy="181" r="12.500" />
                            <circle cx="925" cy="181" r="12.500" />
                            <circle cx="1138" cy="181" r="12.500" />
                            <circle cx="1287" cy="181" r="12.500" />
                            <circle cx="247" cy="376" r="12.500" />
                            <circle cx="247" cy="315" r="12.500" />
                        </g>
                        <g class="ucs">
                            <path d="M289 625L282 604" stroke="#00ff00" />
                            <path d="M279 606l-1-8 8 5z" fill="#00ff00" />
                            <path d="M289 625L297 593" stroke="#0080ff" />
                            <path d="M293 594l8-10 1 13z" fill="#0080ff" />
                            <path d="M290 625L326 629" stroke="#ff0000" />
                            <path d="M324 624l12 6-12 4z" fill="#ff0000" />
                            <path d="M288 577.500h9l-9 10h9" fill="none" stroke="#0080ff" stroke-width="1" />
                            <path d="M321 616l9 9M330 616l-9 9" stroke="#ff0000" stroke-width="1" />
                            <path d="M289 600l5 4" stroke="#00ff00" stroke-width="1" />
                        </g>
                    </svg>

                    <div class="rebar-panel">
                        <h3>钢筋显示控制面板</h3>
                        <div class="rebar-list">
                            <label><input type="checkbox"><span>横向面筋</span></label>
                            <label><input type="checkbox"><span>纵向面筋</span></label>
                            <label><input type="checkbox"><span>侧面受力筋</span></label>
                            <label><input type="checkbox"><span>桩间连接筋</span></label>
                            <label class="current"><input type="checkbox" checked><span>横向分布筋</span></label>
                            <label><input type="checkbox" checked><span>纵向分布筋</span></label>
                            <label><input type="checkbox"><span>显示其它图元</span></label>
                            <label><input type="checkbox"><span>显示详细公式</span></label>
                        </div>
                    </div>
                </div>

                <div class="toolbar snap">
                    <div class="group">
                        <span class="grip"></span>
                        <button class="tool active"><svg class="icon"><use href="#i-ortho" /></svg>正交</button>
                        <button class="tool active"><svg class="icon"><use href="#i-snap" /></svg>对象捕捉</button>
                        <button class="tool"><svg class="icon"><use href="#i-dyn" /></svg>动态输入</button>
                    </div>
                    <div class="group">
                        <span class="grip"></span>
                        <button class="tool"><svg class="icon"><use href="#i-cross" /></svg>交点</button>
                        <button class="tool active"><svg class="icon"><use href="#i-perp" /></svg>垂点</button>
                        <button class="tool active"><svg class="icon"><use href="#i-mid" /></svg>中点</button>
                        <button class="tool"><svg class="icon"><use href="#i-vertex" /></svg>顶点</button>
                        <button class="tool"><svg class="icon"><use href="#i-coord" /></svg>坐标</button>
                    </div>
                    <div class="group">
                        <span class="grip"></span>
                        <select class="combo short" aria-label="偏移方式"><option>不偏移</option></select>
                        <span class="sep"></span>
                        <label class="field">X=<span class="spin"><input type="text" value="0" disabled></span>mm</label>
                        <label class="field">Y=<span class="spin"><input type="text" value="0" disabled></span>mm</label>
                        <span class="sep"></span>
                        <label class="rotate"><input type="checkbox" disabled>旋转</label>
                        <label class="field"><span class="spin wide"><input type="text" value="0.000" aria-label="旋转角度" disabled></span>°</label>
                    </div>
                </div>
            </section>
        </div>

        <footer class="statusbar">
            <span class="cell xy">X=127858 Y=6701</span>
            <span class="cell floor"><b>层高</b>:3.55m</span>
            <span class="cell base"><b>底标高</b>:-3.58m</span>
            <span class="cell count">1(1)</span>
            <span class="cell rest"></span>
            <div class="ime">
                <svg class="sogou" viewBox="0 0 28 28"><path d="M2 5l21-4 4 21-21 5z" fill="#f04c20" /><path d="M20 7c-5-2-11-1-11 3 0 5 11 1 11 6 0 4-7 5-12 2" fill="none" stroke="#fff" stroke-width="3.500" /></svg>
                <b>英</b>
                <svg viewBox="0 0 16 16"><circle cx="4" cy="5" r="2" /><path d="M9 8h4c0 3-1 5-4 6 1-2 2-3 0-6z" /></svg>
                <svg viewBox="0 0 16 16"><rect x="5" y="1" width="6" height="9" rx="3" /><path d="M3 7c0 7 10 7 10 0M8 12v3M5 15.500h6" fill="none" stroke="#1c74c8" stroke-width="1.500" /></svg>
                <svg viewBox="0 0 16 16"><rect y="3" width="16" height="11" rx="1" /><path d="M2 6h12M2 8.500h12M4 11.500h8" stroke="#fff" stroke-dasharray="1.500 1" /></svg>
                <svg class="dim" viewBox="0 0 16 16"><circle cx="6" cy="4" r="3" /><path d="M0 13c0-7 12-7 12 0z" /><text x="5" y="15" font-size="9" font-weight="700" stroke="#fff" stroke-width="2" paint-order="stroke">17</text></svg>
                <svg viewBox="0 0 16 16"><path d="M5 2c1 2 5 2 6 0l5 3-2 4-2-1v7H4V8L2 9 0 5z" /></svg>
                <svg viewBox="0 0 16 16"><path d="M15 4l-3 2-2-2 2-3c-4-1-6 2-5 5l-6 6c-1 2 1 4 3 3l6-6c3 1 6-1 5-5z" /></svg>
            </div>
        </footer>

        <div class="taskbar">
            <button class="start" aria-label="开始"><svg viewBox="0 0 16 16"><path d="M0 2.300L6.500 1.400v6.100H0zM7.500 1.200L16 0v7.500H7.500zM0 8.500h6.500v6.100L0 13.700zM7.500 8.500H16V16l-8.500-1.200z" fill="#fff" /></svg></button>
            <div class="search">
                <svg class="ring" viewBox="0 0 24 24"><circle cx="12" cy="12" r="9.500" fill="none" stroke="#fff" stroke-width="2.500" /></svg>
                <input type="text" placeholder="在这里输入你要搜索的内容" aria-label="搜索">
                <svg class="mic" viewBox="0 0 12 18"><path d="M3.500 1.500h5v9h-5zM1 9v4h10V9M6 13v4M3 17h6" fill="none" stroke="#aaa" /></svg>
            </div>
            <button class="pin" aria-label="风扇"><svg viewBox="0 0 24 24"><g fill="#e8e8e8"><path d="M11.500 11.500C7 13 2 13 1.500 8 1 3 4 1 8 1.500c4 0 5 5 3.500 10z" /><path d="M12.500 11.500C11 7 11 2 16 1.500c5-.5 7 2.500 6.500 6.500 0 4-5 5-10 3.500z" /><path d="M12.500 12.500c4.500-1.500 9.500-1.500 10 3.500.5 5-2.500 7-6.500 6.500-4 0-5-5-3.500-10z" /><path d="M11.500 12.500c1.500 4.500 1.500 9.500-3.500 10-5 .5-7-2.500-6.500-6.500 0-4 5-5 10-3.500z" /></g></svg></button>
            <button class="pin" aria-label="螺旋"><svg viewBox="0 0 28 28"><path d="M14 17c-1-3-5-1-4 2 1 3 8 3 8-2 0-5-6-8-10-5-6 4-5 12 2 14 6 2 11-2 11-8M19 12c-1-3-5-5-9-4-4 1-7 5-7 9" fill="none" stroke="#b0b0b0" stroke-width="1.800" /><path d="M16 12c2-1 2-3 2-5 0-6 8-6 8 0 0 2 0 4 2 5zM20 13h4l-2 2z" fill="#e8ac10" /></svg></button>
            <span class="divider"></span>
            <button class="pin app-pin" aria-label="Edge"><svg viewBox="0 0 24 24"><path d="M2 11C3 4 8 2 12 2c7 0 10 5 10 9v2H9c0 5 7 7 12 4v4c-8 4-17 1-17-7 0-4 2-6 5-8-4 0-6 3-7 5zm7-1h7c0-5-6-5-7 0z" fill="#0c7cdc" /></svg></button>
            <button class="pin app-pin" aria-label="应用商店"><svg viewBox="0 0 24 24"><path d="M2 7h20l-1 16L3 21z" fill="#fff" /><path d="M8 7V4c0-4 8-4 8 0v3" fill="none" stroke="#fff" stroke-width="1.500" /><path d="M6 11l5-.500v4H6zM12 10.500l6-.5v4.500h-6zM6 15.500h5v4L6 19zM12 15.500h6v4.700l-6-.6z" fill="#000c10" /></svg></button>
            <button class="pin app-pin" aria-label="文件资源管理器"><svg viewBox="0 0 24 24"><path d="M1 3h9l1 2h12v16H1z" fill="#f8d878" /><path d="M1 7h22v3H1z" fill="#fce8a8" /><path d="M5 21v-7h14v7h-4v-3H9v3z" fill="#30a8dc" /></svg></button>
            <button class="pin app-pin run" aria-label="浏览器"><svg viewBox="0 0 24 24"><circle cx="12" cy="12" r="11" fill="#f0fce8" /><circle cx="12" cy="12" r="9.500" fill="#50c030" /><path d="M17 16c-5 3-10 0-10-4s4-6 7-5 4 4 3 5H8" fill="none" stroke="#fff" stroke-width="2.500" /><path d="M17 3c2-3 5-3 6-2-1 2-3 3-6 2z" fill="#50c030" /></svg></button>
            <button class="pin app-pin run current" aria-label="广联达"><svg viewBox="0 0 16 16"><use href="#i-app" /></svg></button>
            <button class="pin app-pin run" aria-label="记事"><svg viewBox="0 0 24 24"><rect width="24" height="24" rx="3" fill="#f08c10" /><rect x="1" y="1" width="22" height="22" rx="2" fill="none" stroke="#fcd060" /><path d="M3 7l13-3 3 14-13 3z" fill="#fff8e0" /><path d="M6 10l8-2M7 13l7-2M8 16l5-1" stroke="#886" /><path d="M22 2L14 15l-1 3 3-2 8-12z" fill="#a83c10" /></svg></button>

            <div class="tray">
                <div class="cpu">38%<br>CPU使用</div>
                <svg viewBox="0 0 16 16"><path d="M2 11l6-6 6 6" /></svg>
                <svg viewBox="0 0 16 16"><path d="M5.500 5.500h9v6h-9zM15 7v3M1 3v2h3V3M2.500 5v6h2" /><path d="M7 7h6v3H7z" fill="#fff" /></svg>
                <svg viewBox="0 0 16 16"><path d="M2 13C2 7 7 2 14 2M5 14c0-5 4-9 9-9M8 14c0-3 3-6 6-6" opacity=".7" /><path d="M11 14c0-2 1-3 3-3v3z" fill="#fff" /></svg>
                <svg viewBox="0 0 16 16"><path d="M1 6h2l4-4v12l-4-4H1zM9 6v4" /><path d="M11 4c2 2 2 6 0 8M13 2c3 3 3 9 0 12" opacity=".5" /></svg>
                <b>英</b>
                <svg class="sogou" viewBox="0 0 28 28"><path d="M2 5l21-4 4 21-21 5z" fill="#f04c20" stroke="none" /><path d="M20 7c-5-2-11-1-11 3 0 5 11 1 11 6 0 4-7 5-12 2" stroke-width="3.500" /></svg>
                <time class="clock">14:46<br>2017/8/23</time>
                <svg class="notice" viewBox="0 0 26 26"><path d="M1 2h16v13H8l-3 4v-4H1z" fill="#fff" stroke="none" /><path d="M4 6h10M4 9h10M4 12h6" stroke="#000" /><circle cx="17" cy="17" r="8" fill="#444" stroke="#888" /><text x="13" y="22" font-size="13" font-weight="700" fill="#fff" stroke="none">2</text></svg>
            </div>
        </div>
    </div>
    <script src="script.js"></script>
</body>

</html>
```
FILE: styles.css
```css
* {
    margin: 0;
    padding: 0;
    box-sizing: border-box;
}

body {
    font-family: "Noto Sans", "Noto Sans CJK SC", sans-serif;
    font-size: 12px;
    line-height: 16px;
    color: #000;
    background: #f0f0f0;
}

button,
input,
select {
    font: inherit;
    color: inherit;
    border: 0;
    background: none;
}

ul {
    list-style: none;
}

a {
    color: inherit;
    text-decoration: none;
}

.sprite {
    display: block;
    width: 0;
    height: 0;
}

.icon {
    flex: none;
    width: 16px;
    height: 16px;
}

.app {
    display: flex;
    flex-direction: column;
    height: 100vh;
    overflow: hidden;
}

/* title bar */
.titlebar {
    position: relative;
    display: flex;
    align-items: center;
    gap: 5px;
    height: 24px;
    padding-left: 2px;
    background: #fff;
}

.titlebar h1 {
    flex: 1;
    font-size: 12px;
    font-weight: 400;
    white-space: nowrap;
}

.titlebar h1 span {
    margin-left: 40px;
}

.window-buttons {
    display: flex;
}

.window-buttons button {
    width: 46px;
    height: 20px;
}

.window-buttons svg {
    width: 12px;
    height: 12px;
    fill: none;
    stroke: #000;
}

.speed-ball {
    position: absolute;
    left: 201px;
    top: -30px;
    width: 50px;
    height: 50px;
    padding-top: 27px;
    border: 2px solid #c8e8cc;
    border-radius: 50%;
    background: radial-gradient(#6fdc7c, #2fae49);
    box-shadow: 0 1px 3px #777;
    color: #fff;
    font-weight: 700;
    text-align: center;
}

/* menus and tool bars */
.menubar {
    display: flex;
    align-items: center;
    height: 29px;
    padding-left: 7px;
    white-space: nowrap;
}

.menubar > a {
    margin-right: 11px;
}

.menubar > .tip {
    align-self: stretch;
    flex: 0 0 188px;
    margin: 0 1px 0 0;
    padding-left: 30px;
    line-height: 28px;
    color: #007070;
    background: linear-gradient(#fcfcfc, #f2f2f2);
}

.beans {
    margin: 0 6px 0 5px;
}

.toolbar {
    display: flex;
    gap: 2px;
    height: 28px;
    padding: 0 0 0 1px;
}

.toolbar.top {
    height: 31px;
    padding: 0 0 2px 1px;
}

.group {
    display: flex;
    align-items: center;
    padding: 0 1px;
    border-radius: 3px;
    background: linear-gradient(#fdfdfd, #f1f1f1);
}

.main .group {
    padding: 0 0 1px 2px;
}

.group.file {
    flex: 0 0 149px;
}

.group.calc {
    flex: 0 0 551px;
}

.group.view,
.group.account {
    flex: 1;
}

.group.account {
    align-self: stretch;
}

.group.empty {
    width: 32px;
}

.tool {
    display: flex;
    flex: none;
    align-items: center;
    gap: 4px;
    height: 24px;
    padding: 0 3px 0 2px;
    border: 1px solid transparent;
    white-space: nowrap;
}

.tool:disabled {
    color: #838383;
}

.tool.active {
    border-color: #0078d7;
    background: #dfebf6;
}

.drop::after {
    content: "";
    margin-left: 2px;
    border: 3px solid transparent;
    border-top-color: #000;
    border-bottom: 0;
}

.drop.tight::after {
    margin-left: -2px;
}

.drop:disabled::after {
    border-top-color: #777;
}

.more {
    align-self: flex-start;
    margin-left: auto;
    padding-right: 4px;
    font-size: 14px;
    font-weight: 700;
    line-height: 14px;
}

.sep {
    flex: none;
    width: 1px;
    height: 18px;
    margin: 0 2px 0 3px;
    background: #b4b4b4;
}

.grip {
    width: 3px;
    height: 16px;
    margin-right: 2px;
    background: repeating-linear-gradient(#b8b8b8 0 2px, transparent 2px 4px);
}

.combo {
    width: 69px;
    height: 24px;
    margin-right: 3px;
    padding-left: 2px;
    appearance: none;
    background: url("data:image/svg+xml,%3Csvg xmlns='http://www.w3.org/2000/svg' width='11' height='24'%3E%3Cpath fill='%23f4f4f4' d='M0 0h11v24H0z'/%3E%3Cpath d='M3 11h6l-3 3z'/%3E%3C/svg%3E") right center no-repeat #fff;
}

.combo.short {
    width: 57px;
}

.combo.boxed {
    width: 56px;
    border: 1px solid #777;
    background-color: #f4f4f4;
    opacity: 1;
}

/* side bar */
.main {
    display: grid;
    grid-template-columns: 230px 1fr;
    gap: 4px;
    flex: 1;
    min-height: 0;
}

.sidebar {
    display: flex;
    flex-direction: column;
    min-height: 0;
    padding-bottom: 2px;
}

.sidebar-title {
    display: flex;
    align-items: center;
    height: 16px;
    margin-bottom: 1px;
    padding-right: 2px;
    color: #fff;
    background: #0054e3;
}

.sidebar-title h2 {
    flex: 1;
    font-size: 13px;
    font-weight: 400;
    line-height: 15px;
}

.sidebar-title button {
    width: 18px;
    height: 14px;
}

.sidebar-title svg {
    width: 10px;
    height: 10px;
    fill: none;
    stroke: #fff;
}

.section {
    height: 22px;
    margin-right: 1px;
    border: 1px solid #a0a0a0;
    border-bottom-color: #888;
}

.tree-tools {
    display: flex;
    align-items: center;
    gap: 4px;
    height: 27px;
    margin-right: 1px;
    padding-left: 5px;
    border: 1px solid #a0a0a0;
    border-bottom: 0;
    background: linear-gradient(#fdfdfd, #f1f1f1);
}

.tree-tools svg {
    display: block;
    width: 18px;
    height: 16px;
}

.tree-box {
    display: flex;
    flex: 1;
    min-height: 0;
    margin: 0 2px 1px 1px;
    padding: 1px;
    border: 1px solid #828790;
    background: #fff;
}

.tree {
    flex: 1;
    overflow: hidden;
}

.tree > li > .node {
    display: flex;
    align-items: center;
    gap: 5px;
    height: 16px;
    padding-left: 7px;
}

.node::before {
    content: "";
    width: 6px;
    height: 6px;
    margin-right: 5px;
    border: 1px solid #999;
    border-width: 1px 1px 0 0;
    transform: rotate(45deg);
}

.open > .node::before {
    border-color: #333;
    transform: rotate(135deg);
}

.tree ul {
    background:
        repeating-linear-gradient(#888 0 1px, #fff 1px 2px) 12px 0 / 1px 100% no-repeat,
        repeating-linear-gradient(#888 0 1px, #fff 1px 2px) 31px 0 / 1px calc(100% - 8px) no-repeat;
}

.tree ul li {
    display: flex;
    align-items: center;
    height: 16px;
    padding-left: 32px;
}

.tree ul li::before {
    content: "";
    width: 10px;
    height: 1px;
    background: repeating-linear-gradient(90deg, #fff 0 1px, #888 1px 2px);
}

.tree ul span {
    padding: 0 2px 0 4px;
}

.tree .selected span {
    background: #d9d9d9;
}

.tree i {
    font: 10px/16px "Liberation Mono", monospace;
}

.scrollbar {
    display: flex;
    flex-direction: column;
    width: 16px;
    background: #f0f0f0;
}

.scrollbar svg {
    width: 16px;
    height: 17px;
    fill: none;
    stroke: #505050;
    stroke-width: 2;
}

.track {
    flex: 1;
}

.thumb {
    height: 86%;
    background: #cdcdcd;
}

/* model view */
.work {
    display: flex;
    flex-direction: column;
    min-width: 0;
}

.viewport {
    position: relative;
    flex: 1;
    min-height: 0;
    overflow: hidden;
    background: #000;
}

.scene {
    display: block;
    width: 100%;
    height: 100%;
    fill: none;
    shape-rendering: crispEdges;
}

.orbit {
    stroke: #777;
}

.mesh {
    stroke: #a39087;
}

.axis-lines {
    stroke: #f00;
}

.prism {
    stroke: #fff;
    stroke-opacity: .5;
    stroke-width: 2;
}

.axis-marks {
    stroke: #008000;
}

.axis-names {
    fill: #c8c8c8;
    font: 700 13px "Liberation Sans", sans-serif;
    text-anchor: middle;
}

.ucs {
    stroke-width: 4;
}

.rebar-panel {
    position: absolute;
    left: 10px;
    top: 3px;
    width: 167px;
    height: 178px;
    display: flex;
    flex-direction: column;
    border: 1px solid #444;
    background: #fff;
}

.rebar-panel h3 {
    padding: 6px 7px 8px;
    font-size: 12px;
    font-weight: 400;
    color: #999;
}

.rebar-list {
    flex: 1;
    margin: 0 1px 1px;
    padding: 2px 1px 0 2px;
    border: 1px solid #828790;
}

.rebar-list label {
    display: flex;
    gap: 2px;
    height: 12px;
    line-height: 12px;
}

.rebar-list span {
    flex: 1;
    padding-left: 2px;
}

.rebar-list .current span {
    color: #fff;
    background: #0078d7;
}

input[type="checkbox"] {
    width: 11px;
    height: 11px;
    border: 1px solid #999;
    appearance: none;
    background: #fff;
}

input[type="checkbox"]:checked {
    background: url("data:image/svg+xml,%3Csvg xmlns='http://www.w3.org/2000/svg' width='9' height='9'%3E%3Cpath d='M1 4l2 3 5-5' fill='none' stroke='%23222' stroke-width='1.300'/%3E%3C/svg%3E");
}

.snap {
    height: 32px;
    padding-bottom: 1px;
}

.field {
    display: flex;
    align-items: center;
    gap: 3px;
    margin-right: 3px;
    color: #777;
}

.spin {
    display: flex;
    width: 58px;
    height: 23px;
    border: 1px solid #777;
    background: url("data:image/svg+xml,%3Csvg xmlns='http://www.w3.org/2000/svg' width='12' height='20'%3E%3Cpath fill='%23555' d='M4 6h5L6 3zM4 14h5l-3 3z'/%3E%3C/svg%3E") right center no-repeat #f4f4f4;
}

.spin.wide {
    width: 68px;
}

.spin input {
    width: 100%;
    padding-right: 18px;
    text-align: right;
}

.rotate {
    display: flex;
    align-items: center;
    gap: 8px;
    margin: 0 4px 0 1px;
}

/* status bar */
.statusbar {
    position: relative;
    display: flex;
    gap: 3px;
    height: 21px;
    font: 10px/18px "Liberation Mono", "Noto Sans CJK SC", monospace;
}

.statusbar b {
    font: 12px/16px "Noto Sans CJK SC", sans-serif;
}

.cell {
    display: flex;
    align-items: center;
    padding-left: 1px;
    border: 1px solid #d0d0d0;
    border-left-color: #e8e8e8;
    background: linear-gradient(#fdfdfd, #f3f3f3);
    white-space: nowrap;
}

.xy {
    width: 147px;
}

.floor {
    width: 77px;
}

.base {
    width: 98px;
}

.count {
    width: 48px;
}

.rest {
    flex: 1;
}

.ime {
    position: absolute;
    right: 0;
    bottom: 0;
    display: flex;
    align-items: center;
    justify-content: space-between;
    width: 186px;
    height: 24px;
    padding-right: 4px;
    border: 1px solid #a8c8e8;
    background: #fff;
    color: #1c74c8;
}

.ime svg {
    width: 16px;
    height: 16px;
    fill: #1c74c8;
}

.ime .sogou {
    width: 28px;
    height: 28px;
}

.ime .dim {
    fill: #b4c0d8;
}

.statusbar .ime b {
    font-size: 15px;
    font-weight: 700;
}

/* task bar */
.taskbar {
    display: flex;
    height: 40px;
    color: #fff;
    background: #000c10;
}

.start {
    width: 48px;
    background: #000;
}

.start svg {
    width: 17px;
    height: 17px;
}

.search {
    display: flex;
    align-items: center;
    gap: 5px;
    width: 344px;
    padding: 0 14px 0 8px;
    background: #333;
}

.search input {
    flex: 1;
    min-width: 0;
    font-size: 14px;
}

.search input::placeholder {
    color: #a0a0a0;
}

.ring {
    width: 23px;
    height: 23px;
}

.mic {
    width: 12px;
    height: 18px;
}

.pin {
    width: 52px;
}

.app-pin {
    width: 49px;
    border-bottom: 2px solid transparent;
}

.pin svg {
    display: block;
    width: 24px;
    height: 24px;
    margin: auto;
}

.run {
    border-bottom-color: #76b9ed;
}

.run.current {
    background: #333c40;
}

.divider {
    width: 3px;
    height: 16px;
    margin: 12px 12px 0 5px;
    border: 1px solid #444;
    border-width: 0 1px;
}

.tray {
    display: flex;
    align-items: center;
    gap: 8px;
    margin-left: auto;
    padding-right: 16px;
}

.tray svg {
    width: 16px;
    height: 16px;
    fill: none;
    stroke: #fff;
}

.tray b {
    margin-right: 6px;
}

.tray .notice {
    width: 28px;
    height: 28px;
}

.cpu,
.clock {
    line-height: 17px;
    text-align: center;
}

.cpu {
    margin-right: 10px;
}

.clock {
    margin: 0 9px 0 11px;
}
```
FILE: script.js
```js
const SVG = "http://www.w3.org/2000/svg";

function addPath(parent, d) {
    const path = document.createElementNS(SVG, "path");
    path.setAttribute("d", d);
    parent.appendChild(path);
}

// pile cap: one hexagon for each level
const levels = [
    [[547, 173], [679, 187], [1021, 467], [978, 525], [471, 471], [382, 399]],
    [[539, 203], [670, 217], [1012, 497], [969, 555], [462, 501], [374, 428]],
    [[524, 253], [656, 266], [999, 546], [955, 605], [448, 551], [359, 478]]
];
const prism = document.getElementById("prism");
levels.forEach(function (level) {
    addPath(prism, "M" + level.join("L") + "Z");
});
levels[0].forEach(function (p, i) {
    addPath(prism, "M" + p + "L" + levels[1][i] + "L" + levels[2][i]);
});

// outline that the bars of the mesh run between
const outline = [[529, 244], [658, 259], [993, 533], [990, 544], [958, 593], [453, 538], [381, 480], [367, 466]];

// crossings of the line through (x, y) in direction (dx, dy) with the outline
function crossings(x, y, dx, dy) {
    const hits = [];
    outline.forEach(function (a, i) {
        const b = outline[(i + 1) % outline.length];
        const ex = b[0] - a[0], ey = b[1] - a[1];
        const det = dx * ey - dy * ex;
        const t = ((a[0] - x) * ey - (a[1] - y) * ex) / det;
        const u = ((a[0] - x) * dy - (a[1] - y) * dx) / det;
        if (u >= 0 && u <= 1) hits.push([x + t * dx, y + t * dy]);
    });
    return hits;
}

const mesh = document.getElementById("mesh");

// 横向分布筋
for (let i = 0; i < 25; i++) {
    const ends = crossings(620, 255.3 + 12.5 * i, 1, 0.1058).sort((a, b) => a[0] - b[0]);
    if (ends.length < 2) continue;
    const l = ends[0], r = ends[ends.length - 1];
    addPath(mesh, `M${l[0] + 2} ${l[1] - 10}L${l}L${r}l2 -9`);
}

// 纵向分布筋
for (let i = -3; i < 25; i++) {
    const x = 456.7 + 22.8 * i;
    const ends = crossings(x, 538.4 + 0.1069 * (x - 456.7), -0.349, -1).sort((a, b) => a[1] - b[1]);
    if (ends.length < 2) continue;
    const t = ends[0], b = ends[ends.length - 1];
    addPath(mesh, `M${t[0] + 1} ${t[1] - 13}L${t[0] - 1} ${t[1] - 5}L${t}L${b}l2 -10`);
}
```
